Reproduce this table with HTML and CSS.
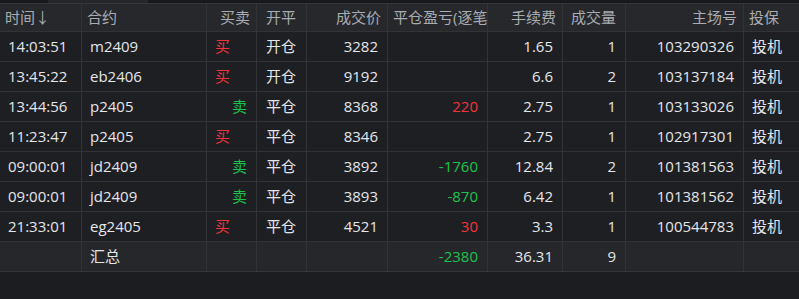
FILE: index.html
```html
<!DOCTYPE html>
<html lang="zh">
<head>
<meta charset="utf-8">
<link rel="stylesheet" href="styles.css">
</head>
<body>
<div class="strip"><span class="tab"></span></div>
<div class="grid">
  <div class="cell h l">时间↓</div>
  <div class="cell h l">合约</div>
  <div class="cell h r">买卖</div>
  <div class="cell h c">开平</div>
  <div class="cell h r">成交价</div>
  <div class="cell h l clip">平仓盈亏(逐笔)</div>
  <div class="cell h r">手续费</div>
  <div class="cell h c">成交量</div>
  <div class="cell h r">主场号</div>
  <div class="cell h l">投保</div>

  <div class="cell l">14:03:51</div><div class="cell l">m2409</div><div class="cell l red">买</div><div class="cell c">开仓</div><div class="cell r">3282</div><div class="cell r"></div><div class="cell r">1.65</div><div class="cell r">1</div><div class="cell r">103290326</div><div class="cell l">投机</div>

  <div class="cell l">13:45:22</div><div class="cell l">eb2406</div><div class="cell l red">买</div><div class="cell c">开仓</div><div class="cell r">9192</div><div class="cell r"></div><div class="cell r">6.6</div><div class="cell r">2</div><div class="cell r">103137184</div><div class="cell l">投机</div>

  <div class="cell l">13:44:56</div><div class="cell l">p2405</div><div class="cell r green">卖</div><div class="cell c">平仓</div><div class="cell r">8368</div><div class="cell r red">220</div><div class="cell r">2.75</div><div class="cell r">1</div><div class="cell r">103133026</div><div class="cell l">投机</div>

  <div class="cell l">11:23:47</div><div class="cell l">p2405</div><div class="cell l red">买</div><div class="cell c">平仓</div><div class="cell r">8346</div><div class="cell r"></div><div class="cell r">2.75</div><div class="cell r">1</div><div class="cell r">102917301</div><div class="cell l">投机</div>

  <div class="cell l">09:00:01</div><div class="cell l">jd2409</div><div class="cell r green">卖</div><div class="cell c">平仓</div><div class="cell r">3892</div><div class="cell r green">-1760</div><div class="cell r">12.84</div><div class="cell r">2</div><div class="cell r">101381563</div><div class="cell l">投机</div>

  <div class="cell l">09:00:01</div><div class="cell l">jd2409</div><div class="cell r green">卖</div><div class="cell c">平仓</div><div class="cell r">3893</div><div class="cell r green">-870</div><div class="cell r">6.42</div><div class="cell r">1</div><div class="cell r">101381562</div><div class="cell l">投机</div>

  <div class="cell l">21:33:01</div><div class="cell l">eg2405</div><div class="cell l red">买</div><div class="cell c">平仓</div><div class="cell r">4521</div><div class="cell r red">30</div><div class="cell r">3.3</div><div class="cell r">1</div><div class="cell r">100544783</div><div class="cell l">投机</div>

  <div class="cell s l"></div><div class="cell s l">汇总</div><div class="cell s"></div><div class="cell s"></div><div class="cell s"></div><div class="cell s r green">-2380</div><div class="cell s r">36.31</div><div class="cell s r">9</div><div class="cell s"></div><div class="cell s"></div>
</div>
</body>
</html>
```
FILE: styles.css
```css
html, body {
  margin: 0;
  padding: 0;
  background: #1c1d21;
  width: 799px;
  height: 299px;
  overflow: hidden;
}
body {
  font-family: "Open Sans", "Noto Sans CJK SC", sans-serif;
  font-size: 15px;
  color: #e4e6ea;
}
.strip {
  height: 3px;
  background: #18191c;
  display: flex;
}
.tab {
  margin-left: 48px;
  width: 100px;
  background: #26272b;
}
.grid {
  display: grid;
  grid-template-columns: 81px 124px 49px 49px 80px 99px 74px 62px 117px 1fr;
  grid-auto-rows: 29px;
  grid-template-rows: 27px;
  column-gap: 1px;
  row-gap: 1px;
  background: #323337;
  border-top: 1px solid #35363a;
  border-bottom: 1px solid #35363a;
}
.cell {
  background: #1e1f23;
  display: flex;
  align-items: center;
  padding: 0 9px 0 8px;
  white-space: nowrap;
  overflow: hidden;
  line-height: 1;
}
.cell.h {
  background: #27282c;
  color: #a9acb2;
  padding: 0 6px 0 5px;
}
.cell.s {
  background: #26272b;
}
.l { justify-content: flex-start; }
.r { justify-content: flex-end; }
.c { justify-content: center; }
.clip { overflow: hidden; }
.red { color: #f0343a; }
.green { color: #1cc24d; }
```
